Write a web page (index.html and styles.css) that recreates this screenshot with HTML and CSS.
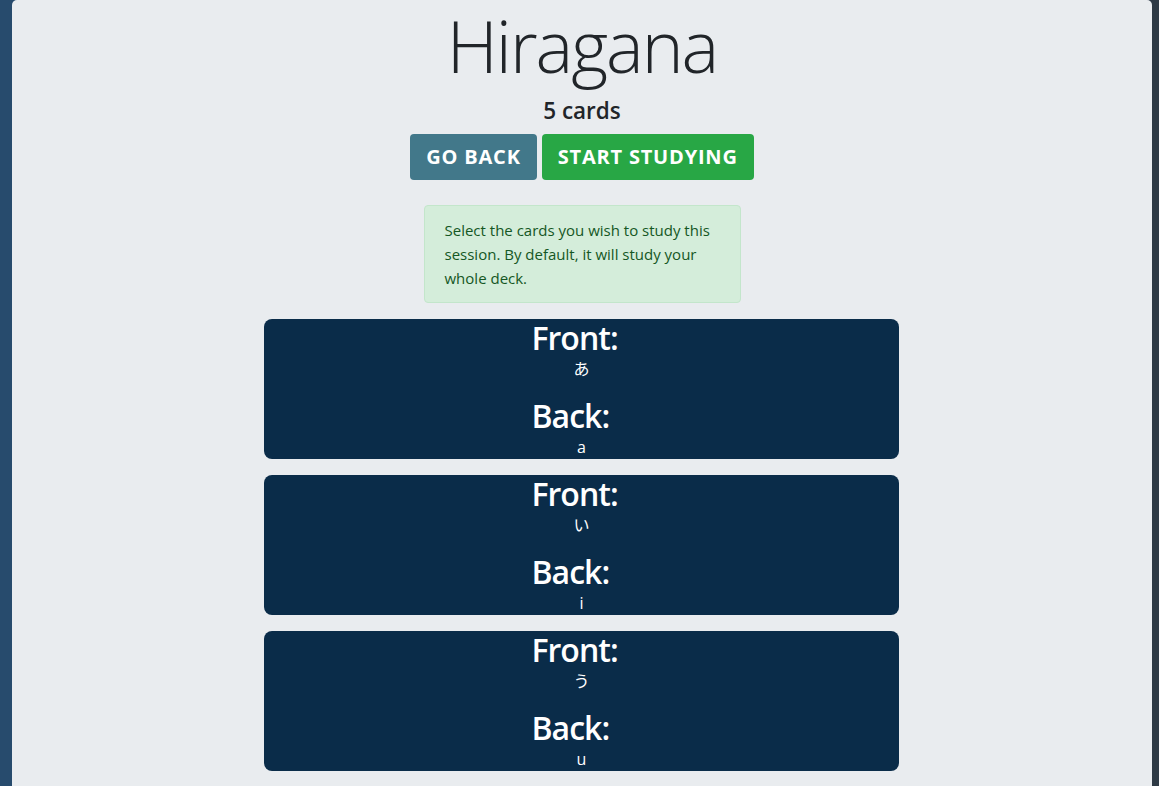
FILE: index.html
```html
<!DOCTYPE html>
<html lang="en">
<head>
<meta charset="utf-8">
<title>Hiragana</title>
<link rel="stylesheet" href="styles.css">
</head>
<body>
<main class="panel">
  <h1 class="title">Hiragana</h1>
  <h4 class="count">5 cards</h4>
  <div class="actions">
    <button class="btn btn-back">Go Back</button>
    <button class="btn btn-start">Start Studying</button>
  </div>
  <div class="alert">Select the cards you wish to study this session. By default, it will study your whole deck.</div>
  <section class="cards">
    <div class="card">
      <div class="card-body">
        <h2 class="side">Front:</h2>
        <p class="value value-front">あ</p>
        <h2 class="side">Back:</h2>
        <p class="value">a</p>
      </div>
    </div>
    <div class="card">
      <div class="card-body">
        <h2 class="side">Front:</h2>
        <p class="value value-front">い</p>
        <h2 class="side">Back:</h2>
        <p class="value">i</p>
      </div>
    </div>
    <div class="card">
      <div class="card-body">
        <h2 class="side">Front:</h2>
        <p class="value value-front">う</p>
        <h2 class="side">Back:</h2>
        <p class="value">u</p>
      </div>
    </div>
    <div class="card">
      <div class="card-body">
        <h2 class="side">Front:</h2>
        <p class="value value-front">え</p>
        <h2 class="side">Back:</h2>
        <p class="value">e</p>
      </div>
    </div>
    <div class="card">
      <div class="card-body">
        <h2 class="side">Front:</h2>
        <p class="value value-front">お</p>
        <h2 class="side">Back:</h2>
        <p class="value">o</p>
      </div>
    </div>
  </section>
</main>
</body>
</html>
```

FILE: styles.css
```css
* { box-sizing: border-box; }

html, body {
  margin: 0;
  padding: 0;
}

body {
  font-family: "Open Sans", "Noto Sans CJK JP", sans-serif;
  font-size: 16px;
  line-height: 1.5;
  color: #212529;
  background: linear-gradient(to right, #274b6d 0%, #284a6b 96%, #2e3a45 99.4%);
  min-height: 100vh;
}

.panel {
  margin-left: 12px;
  width: 1140px;
  min-height: 100vh;
  background: #e9ecef;
  border-radius: 5px 5px 0 0;
  padding-top: 4px;
  text-align: center;
}

.title {
  margin: 0 0 9px;
  font-size: 71px;
  font-weight: 300;
  line-height: 84px;
  letter-spacing: -2px;
  color: #212529;
}

.count {
  margin: 0 0 9px;
  font-size: 22.5px;
  font-weight: 600;
  line-height: 28px;
}

.actions {
  display: flex;
  justify-content: center;
  gap: 5px;
  margin-bottom: 25px;
}

.btn {
  font-family: "Open Sans", sans-serif;
  font-size: 20px;
  font-weight: 700;
  line-height: 30px;
  text-transform: uppercase;
  letter-spacing: 0.8px;
  color: #fff;
  border: 0;
  border-radius: 4px;
  padding: 8px 16px;
}

.btn-back { background: #42788a; }
.btn-start { background: #28a745; }

.alert {
  width: 317px;
  margin: 0 auto 16px;
  padding: 12px 20px;
  background: #d4edda;
  border: 1px solid #c3e6cb;
  border-radius: 4px;
  color: #155724;
  text-align: left;
  font-size: 15px;
  line-height: 24px;
}

.cards {
  display: flex;
  flex-direction: column;
  align-items: center;
  gap: 16px;
}

.card {
  width: 635px;
  margin-right: 1px;
  background: #0a2c49;
  border-radius: 8px;
  color: #fff;
}

.card-body {
  width: 100px;
  margin: 0 auto;
}

.side {
  margin: 0;
  font-size: 32px;
  font-weight: 600;
  line-height: 38px;
  letter-spacing: -1px;
  text-align: left;
}

.value {
  margin: 0;
  font-size: 16px;
  line-height: 24px;
  text-align: center;
}

.value-front {
  margin-bottom: 16px;
}
```
